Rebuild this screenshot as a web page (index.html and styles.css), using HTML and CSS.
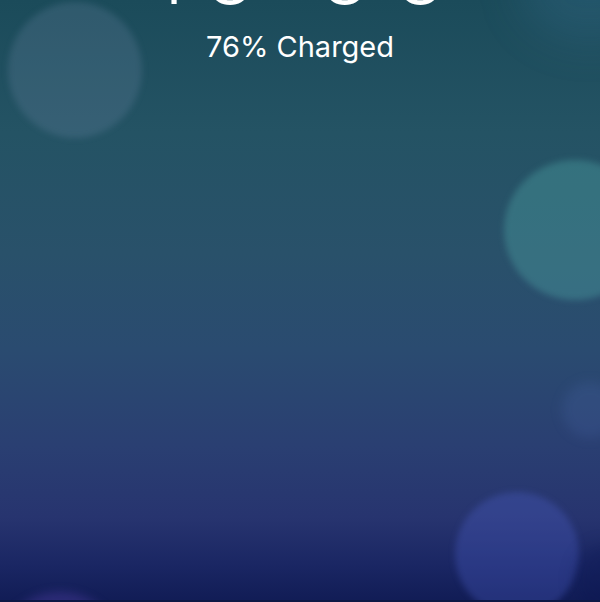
FILE: index.html
```html
<!DOCTYPE html>
<html>
<head>
<meta charset="utf-8">
<link rel="stylesheet" href="styles.css">
</head>
<body>
<div class="screen">
  <div class="bokeh b1"></div>
  <div class="bokeh b2"></div>
  <div class="bokeh b3"></div>
  <div class="bokeh b4"></div>
  <div class="bokeh b5"></div>
  <div class="bokeh b6"></div>
  <div class="bokeh b7"></div>
  <div class="content">
    <div class="clock">10<span class="colon">:</span>00</div>
    <div class="status">76% Charged</div>
  </div>
</div>
</body>
</html>
```
FILE: styles.css
```css
html, body {
  margin: 0;
  padding: 0;
  width: 600px;
  height: 602px;
  overflow: hidden;
}
.screen {
  position: relative;
  width: 600px;
  height: 602px;
  overflow: hidden;
  background: linear-gradient(180deg, #1b4b5a 0%, #245364 22%, #29516a 42%, #2a4b70 58%, #2a3f72 74%, #27346f 86%, #1a2663 94%, #111c55 100%);
  font-family: Inter, "Noto Sans", sans-serif;
  color: #fff;
}
.screen::after {
  content: "";
  position: absolute;
  left: 0;
  right: 0;
  bottom: 0;
  height: 2px;
  background: #0d1946;
}
.bokeh {
  position: absolute;
  border-radius: 50%;
  filter: blur(3px);
}
.b1 { left: 8px; top: 2px; width: 134px; height: 136px; background: rgba(130, 150, 185, 0.2); }
.b2 { left: 504px; top: 160px; width: 142px; height: 140px; background: rgba(80, 170, 170, 0.36); }
.b3 { left: 562px; top: 382px; width: 56px; height: 56px; background: rgba(90, 120, 190, 0.16); filter: blur(6px); }
.b4 { left: 455px; top: 492px; width: 124px; height: 124px; background: rgba(80, 100, 210, 0.3); }
.b5 { left: -5px; top: 592px; width: 130px; height: 130px; background: rgba(110, 80, 200, 0.28); filter: blur(5px); }
.b6 { left: 520px; top: -70px; width: 140px; height: 110px; background: rgba(80, 140, 190, 0.16); filter: blur(22px); }
.b7 { left: 575px; top: 545px; width: 60px; height: 70px; background: rgba(10, 20, 80, 0.35); filter: blur(8px); }
.content {
  position: relative;
  display: flex;
  flex-direction: column;
  align-items: center;
}
.clock {
  font-size: 112px;
  font-weight: 200;
  line-height: 112px;
  margin-top: -93px;
  letter-spacing: 8px;
  padding-left: 8px;
}
.colon {
  position: relative;
  top: -14px;
}
.status {
  margin-top: 10px;
  font-size: 29px;
  font-weight: 400;
  line-height: 36px;
}
```
